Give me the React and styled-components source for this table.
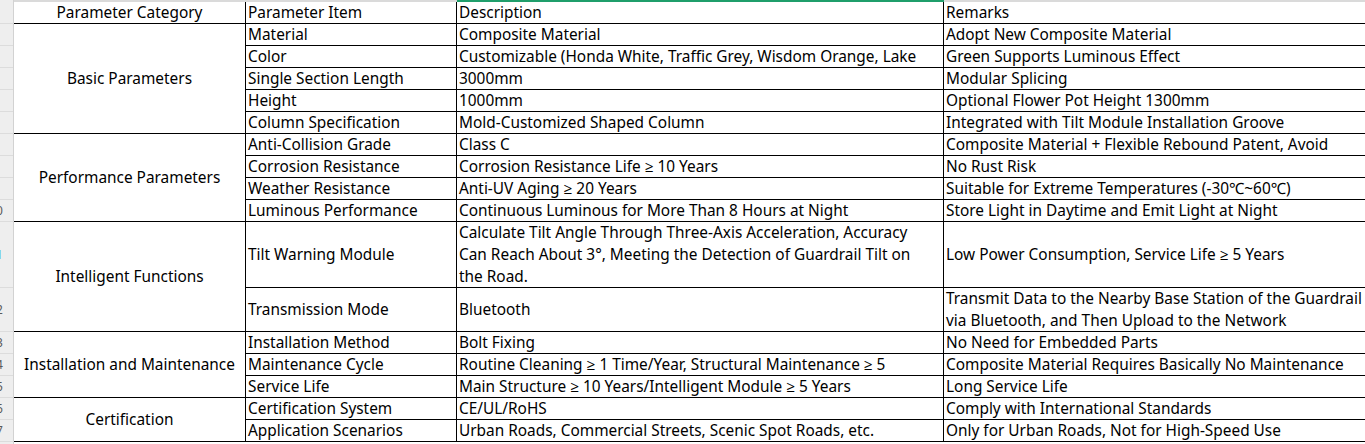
import React from "react";
import styled, { createGlobalStyle } from "styled-components";

const GlobalStyle = createGlobalStyle`
  html, body {
    margin: 0;
    padding: 0;
    background: #ffffff;
  }
  body {
    font-family: "Noto Sans", "Open Sans", "Noto Sans CJK SC", sans-serif;
    color: #000;
    overflow: hidden;
  }
`;

const groups = [
  {
    name: "Basic Parameters",
    items: [
      { item: "Material", desc: "Composite Material", remark: "Adopt New Composite Material" },
      { item: "Color", desc: "Customizable (Honda White, Traffic Grey, Wisdom Orange, Lake", remark: "Green Supports Luminous Effect" },
      { item: "Single Section Length", desc: "3000mm", remark: "Modular Splicing" },
      { item: "Height", desc: "1000mm", remark: "Optional Flower Pot Height 1300mm" },
      { item: "Column Specification", desc: "Mold-Customized Shaped Column", remark: "Integrated with Tilt Module Installation Groove" },
    ],
  },
  {
    name: "Performance Parameters",
    items: [
      { item: "Anti-Collision Grade", desc: "Class C", remark: "Composite Material + Flexible Rebound Patent, Avoid" },
      { item: "Corrosion Resistance", desc: "Corrosion Resistance Life ≥ 10 Years", remark: "No Rust Risk" },
      { item: "Weather Resistance", desc: "Anti-UV Aging ≥ 20 Years", remark: "Suitable for Extreme Temperatures (-30℃~60℃)" },
      { item: "Luminous Performance", desc: "Continuous Luminous for More Than 8 Hours at Night", remark: "Store Light in Daytime and Emit Light at Night" },
    ],
  },
  {
    name: "Intelligent Functions",
    items: [
      {
        item: "Tilt Warning Module",
        desc: [
          "Calculate Tilt Angle Through Three-Axis Acceleration, Accuracy",
          "Can Reach About 3°, Meeting the Detection of Guardrail Tilt on",
          "the Road.",
        ],
        remark: "Low Power Consumption, Service Life ≥ 5 Years",
        span: 3,
      },
      {
        item: "Transmission Mode",
        desc: "Bluetooth",
        remark: [
          "Transmit Data to the Nearby Base Station of the Guardrail",
          "via Bluetooth, and Then Upload to the Network",
        ],
        span: 2,
      },
    ],
  },
  {
    name: "Installation and Maintenance",
    items: [
      { item: "Installation Method", desc: "Bolt Fixing", remark: "No Need for Embedded Parts" },
      { item: "Maintenance Cycle", desc: "Routine Cleaning ≥ 1 Time/Year, Structural Maintenance ≥ 5", remark: "Composite Material Requires Basically No Maintenance" },
      { item: "Service Life", desc: "Main Structure ≥ 10 Years/Intelligent Module ≥ 5 Years", remark: "Long Service Life" },
    ],
  },
  {
    name: "Certification",
    items: [
      { item: "Certification System", desc: "CE/UL/RoHS", remark: "Comply with International Standards" },
      { item: "Application Scenarios", desc: "Urban Roads, Commercial Streets, Scenic Spot Roads, etc.", remark: "Only for Urban Roads, Not for High-Speed Use" },
    ],
  },
];

const UNIT = 22;
const COLUMNS = "232px 211px 487px 480px";

const Sheet = styled.div`
  display: flex;
  width: 1365px;
  height: 444px;
  overflow: hidden;
  background: #fff;
`;

/* the row-number column is scrolled so that only its right edge shows */
const RowHeaders = styled.div`
  display: flex;
  flex-direction: column;
  flex: 0 0 14px;
  width: 14px;
  min-width: 0;
  overflow: hidden;
  background: #eeeeee;
  border-right: 1px solid #d2d2d2;
  box-sizing: border-box;
`;

const CornerGap = styled.div`
  flex: 0 0 2px;
`;

const RowNumber = styled.div`
  display: flex;
  justify-content: flex-end;
  align-items: center;
  flex: 0 0 ${(p) => p.$height}px;
  box-sizing: border-box;
  border-bottom: 1px solid #dcdcdc;
  padding-right: 5px;
  overflow: hidden;
  white-space: nowrap;
  font-family: "Noto Sans", sans-serif;
  font-size: 12px;
  color: ${(p) => (p.$active ? "#4aa8e0" : "#5a5a5a")};
`;

const RowLabel = styled.span`
  flex: 0 0 24px;
  text-align: center;
`;

const TableArea = styled.div`
  flex: 1;
  min-width: 0;
  overflow: hidden;
`;

const TopRule = styled.div`
  display: grid;
  grid-template-columns: ${COLUMNS};
  height: 2px;
  background: #dadada;
`;

const RuleSegment = styled.div`
  background: ${(p) => (p.$selected ? "#1f9e6b" : "transparent")};
`;

const Grid = styled.div`
  display: grid;
  grid-template-columns: ${COLUMNS};
  grid-auto-rows: ${UNIT}px;
`;

const Cell = styled.div`
  grid-column: ${(p) => p.$col};
  grid-row: ${(p) => p.$row} / span ${(p) => p.$span || 1};
  display: flex;
  flex-direction: column;
  justify-content: center;
  align-items: ${(p) => (p.$center ? "center" : "flex-start")};
  padding: 0 2px;
  box-sizing: border-box;
  border-right: 1px solid #000;
  border-bottom: 1px solid #000;
  overflow: hidden;
  white-space: nowrap;
  font-size: 15.4px;
  line-height: 22px;
  color: #000;
`;

const Line = styled.span`
  display: block;
`;

function CellText({ value }) {
  if (Array.isArray(value)) {
    return value.map((line) => <Line key={line}>{line}</Line>);
  }
  return value;
}

const rowNumbers = (() => {
  const list = [{ n: 1, h: UNIT }];
  let n = 2;
  groups.forEach((g) =>
    g.items.forEach((it) => {
      list.push({ n, h: UNIT * (it.span || 1) });
      n += 1;
    })
  );
  return list;
})();

export default function App() {
  let row = 2;
  const cells = [];

  groups.forEach((group) => {
    const total = group.items.reduce((s, it) => s + (it.span || 1), 0);
    cells.push(
      <Cell key={group.name} $col={1} $row={row} $span={total} $center>
        {group.name}
      </Cell>
    );
    group.items.forEach((it) => {
      const span = it.span || 1;
      cells.push(
        <Cell key={it.item} $col={2} $row={row} $span={span}>
          <CellText value={it.item} />
        </Cell>,
        <Cell key={it.item + "-d"} $col={3} $row={row} $span={span}>
          <CellText value={it.desc} />
        </Cell>,
        <Cell key={it.item + "-r"} $col={4} $row={row} $span={span}>
          <CellText value={it.remark} />
        </Cell>
      );
      row += span;
    });
  });

  return (
    <>
      <GlobalStyle />
      <Sheet>
        <RowHeaders>
          <CornerGap />
          {rowNumbers.map((r) => (
            <RowNumber key={r.n} $height={r.h} $active={r.n === 11}>
              <RowLabel>{r.n}</RowLabel>
            </RowNumber>
          ))}
        </RowHeaders>
        <TableArea>
          <TopRule>
            <RuleSegment />
            <RuleSegment />
            <RuleSegment $selected />
            <RuleSegment />
          </TopRule>
          <Grid>
            <Cell $col={1} $row={1} $center>Parameter Category</Cell>
            <Cell $col={2} $row={1}>Parameter Item</Cell>
            <Cell $col={3} $row={1}>Description</Cell>
            <Cell $col={4} $row={1}>Remarks</Cell>
            {cells}
          </Grid>
        </TableArea>
      </Sheet>
    </>
  );
}
